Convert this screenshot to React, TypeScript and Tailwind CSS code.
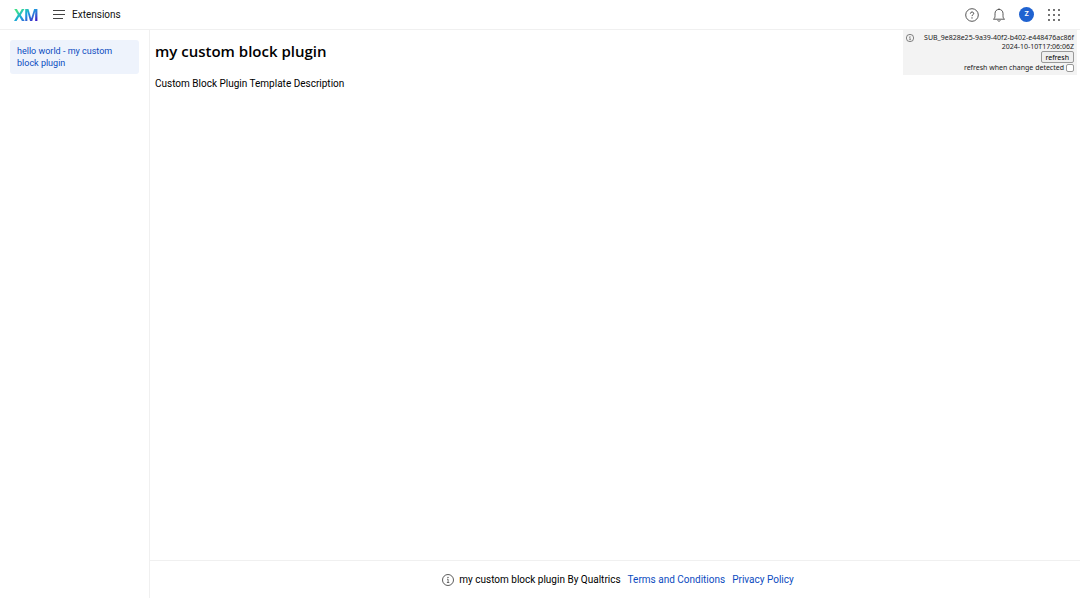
import React from "react";

function InfoIcon({ className }: { className: string }) {
  return (
    <svg viewBox="0 0 12 12" fill="none" stroke="currentColor" className={className} aria-hidden="true">
      <circle cx="6" cy="6" r="5.5" strokeWidth="0.8" />
      <path d="M5 5.2h1.1v3.3M4.9 8.5h2.4" strokeWidth="0.7" />
      <circle cx="6" cy="3.4" r="0.6" fill="currentColor" stroke="none" />
    </svg>
  );
}

function Header() {
  return (
    <header className="flex h-[30px] shrink-0 items-center border-b border-[#f0f0f0] pr-[19px] pl-3.5">
      <a
        href="#home"
        className="w-6 bg-linear-to-br from-[#3fe08a] from-20% via-[#1b9be0] via-50% to-[#3a20c8] to-85% bg-clip-text font-['Open_Sans',sans-serif] text-[16px] leading-4 font-bold tracking-tighter text-transparent"
      >
        XM
      </a>
      <button type="button" aria-label="Menu" className="ml-[15px] text-[#444]">
        <svg viewBox="0 0 12 10" fill="none" stroke="currentColor" strokeWidth="1" className="h-2.5 w-3">
          <path d="M0 .5h12M0 4.500h12M0 8.500h10" />
        </svg>
      </button>
      <span className="ml-[7px] text-[10px] text-[#111]">Extensions</span>
      <div className="ml-auto flex items-center gap-[13px]">
        <button type="button" aria-label="Help" className="text-[#444]">
          <svg viewBox="0 0 14 14" fill="none" stroke="currentColor" className="size-3.5">
            <circle cx="7" cy="7" r="6.3" strokeWidth="0.9" />
            <path d="M5.400 5.600c0-2.100 3.300-2.100 3.300-.1 0 1.300-1.700 1.200-1.700 2.600" strokeWidth="1" />
            <circle cx="7" cy="9.900" r="0.700" fill="currentColor" stroke="none" />
          </svg>
        </button>
        <button type="button" aria-label="Notifications" className="text-[#444]">
          <svg viewBox="0 0 14 14" fill="none" stroke="currentColor" strokeWidth="0.900" className="size-3.5">
            <path d="M1.500 11.200h11c-1.200-.9-1.500-1.900-1.500-3.500V5.500C11 3 9.300 1.400 7 1.400S3 3 3 5.500v2.200c0 1.600-.3 2.600-1.500 3.500z" strokeLinejoin="round" />
            <path d="M5.700 12.300c.4 1.300 2.200 1.300 2.600 0M7 .4v1" />
          </svg>
        </button>
        <button
          type="button"
          aria-label="Account"
          className="flex size-[15px] items-center justify-center rounded-full bg-[#1f62d0] text-[7px] leading-none font-bold text-white"
        >
          Z
        </button>
        <button type="button" aria-label="Apps" className="text-[#333]">
          <svg viewBox="0 0 14 14" fill="currentColor" className="size-3.5">
            {[2, 7, 12].map((y) =>
              [2, 7, 12].map((x) => <circle key={`${x}-${y}`} cx={x} cy={y} r="0.9" />),
            )}
          </svg>
        </button>
      </div>
    </header>
  );
}

function DebugPanel() {
  return (
    <aside className="mr-[3px] flex min-w-[174px] flex-col items-end self-start bg-[#f3f3f3] p-[3px] font-['Noto_Sans',sans-serif] text-[7px] leading-[9px] text-[#222]">
      <div className="flex w-full items-center justify-between">
        <InfoIcon className="size-2" />
        <span>SUB_9e828e25-9a39-40f2-b402-e448476ac86f</span>
      </div>
      <time>2024-10-10T17:06:06Z</time>
      <button type="button" className="h-3 rounded-[2px] border border-[#999] bg-[#efefef] px-1 leading-[9px] text-black">
        refresh
      </button>
      <label className="flex items-center gap-0.5">
        refresh when change detected
        <input type="checkbox" className="size-2 appearance-none rounded-[2px] border border-[#999] bg-white" />
      </label>
    </aside>
  );
}

export default function App() {
  return (
    <div className="flex min-h-screen flex-col bg-white font-['Roboto',sans-serif] text-black">
      <Header />
      <div className="flex grow">
        <nav className="w-[150px] shrink-0 border-r border-[#f0f0f0] p-2.5">
          <a href="#hello-world" className="block rounded-[3px] bg-[#eef3fc] px-[7px] py-[5px] text-[9px] leading-3 text-[#0b4bc0]">
            hello world - my custom block plugin
          </a>
        </nav>
        <div className="flex grow flex-col">
          <div className="flex grow justify-between">
            <main className="px-[5px] pt-[11px]">
              <h1 className="font-['Open_Sans',sans-serif] text-[15px] leading-5 font-semibold">my custom block plugin</h1>
              <p className="mt-4 text-[10px] leading-[14px]">Custom Block Plugin Template Description</p>
            </main>
            <DebugPanel />
          </div>
          <footer className="flex h-[38px] shrink-0 items-center justify-center border-t border-[#f0f0f0] pl-1.5 text-[10px]">
            <InfoIcon className="mr-[5px] size-3 text-[#333]" />
            <span>my custom block plugin By Qualtrics</span>
            <a href="#terms" className="ml-[7px] text-[#0b4bc0]">Terms and Conditions</a>
            <a href="#privacy" className="ml-[7px] text-[#0b4bc0]">Privacy Policy</a>
          </footer>
        </div>
      </div>
    </div>
  );
}
